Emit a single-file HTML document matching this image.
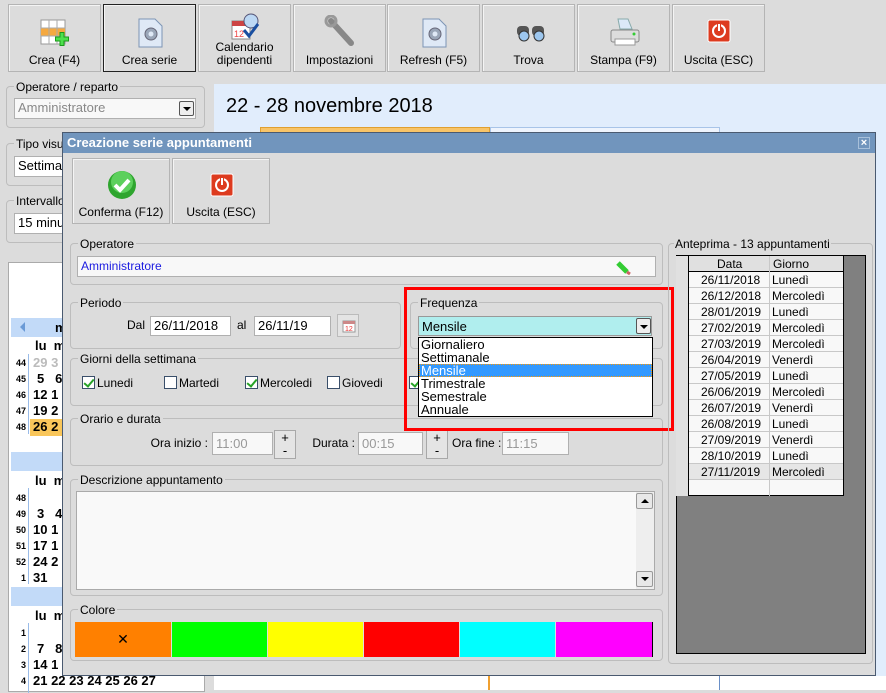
<!DOCTYPE html>
<html><head><meta charset="utf-8"><style>
*{box-sizing:border-box;margin:0;padding:0}
body{width:886px;height:690px;overflow:hidden;background:#dcdcdc;font-family:"Liberation Sans","DejaVu Sans",sans-serif;font-size:12px;color:#000;position:relative}
.a{position:absolute}
.btn{position:absolute;background:#dcdcdc;border:1px solid #b4b4b4;box-shadow:inset 1px 1px 0 #f4f4f4;text-align:center;font-size:12px}
.btn .l{position:absolute;left:0;right:0;bottom:4px;line-height:13px}
.grp{position:absolute;border:1px solid #bdbdbd;border-radius:4px}
.grp>.t{position:absolute;left:7px;top:-7px;background:#dcdcdc;padding:0 2px;line-height:14px}
.inp{position:absolute;background:#f8f8f8;border:1px solid #b0b0b0;line-height:18px;padding-left:3px}
.cb{position:absolute;width:13px;height:13px;border:1px solid #3a4f6a;background:#fff}
.cb.c::after{content:"";position:absolute;left:3px;top:0px;width:4px;height:8px;border:solid #27a327;border-width:0 2px 2px 0;transform:rotate(40deg)}
.pm{position:absolute;width:22px;height:29px;border:1px solid #a8a8a8;background:#e4e4e4;text-align:center;line-height:13px;font-size:13px}
.cal{position:absolute;font-weight:bold;font-size:13px}
.wk{position:absolute;font-weight:bold;font-size:9px;width:20px;text-align:right}
.tr{position:absolute;left:676px;width:167px;height:16px;border-bottom:1px solid #c8c8c8;background:#f8f8f8;font-size:12px;line-height:16px}
</style></head><body>

<!-- toolbar -->
<div class="btn" style="left:8px;top:4px;width:93px;height:68px">
<svg class="a" style="left:31px;top:14px" width="30" height="30"><rect x="1" y="1" width="24" height="24" fill="#fff" stroke="#999"/><rect x="1" y="9" width="24" height="8" fill="#f5a940"/><path d="M9 1V25M17 1V25M1 9H25M1 17H25" stroke="#aaa"/><path d="M22 13v14M15 20h14" stroke="#1b9a1b" stroke-width="5"/><path d="M22 14v12M16 20h12" stroke="#4de04d" stroke-width="3"/></svg>
<div class="l">Crea (F4)</div></div>
<div class="btn" style="left:103px;top:4px;width:93px;height:68px;border:1px solid #222">
<svg class="a" style="left:32px;top:12px" width="30" height="32"><path d="M3 2h16l7 7v21H3z" fill="#dfe9f6" stroke="#7d95b5"/><circle cx="15" cy="17" r="6" fill="#9aa6b8" stroke="#667"/><circle cx="15" cy="17" r="2.5" fill="#dfe9f6"/></svg>
<div class="l">Crea serie</div></div>
<div class="btn" style="left:198px;top:4px;width:93px;height:68px">
<svg class="a" style="left:31px;top:8px" width="32" height="30"><rect x="2" y="8" width="18" height="18" fill="#fff" stroke="#888"/><rect x="2" y="8" width="18" height="5" fill="#c44"/><text x="4" y="24" font-size="9" fill="#e44" font-family="Liberation Sans">12</text><circle cx="21" cy="8" r="7" fill="#bcd8f4" stroke="#557"/><path d="M14 17l5 6 9-12" stroke="#1a4fa0" stroke-width="3" fill="none"/></svg>
<div class="l">Calendario<br>dipendenti</div></div>
<div class="btn" style="left:293px;top:4px;width:93px;height:68px">
<svg class="a" style="left:30px;top:10px" width="34" height="34"><path d="M7 6l20 22" stroke="#888" stroke-width="6" stroke-linecap="round"/><circle cx="7" cy="6" r="5" fill="none" stroke="#999" stroke-width="3"/></svg>
<div class="l">Impostazioni</div></div>
<div class="btn" style="left:387px;top:4px;width:93px;height:68px">
<svg class="a" style="left:32px;top:12px" width="30" height="32"><path d="M3 2h16l7 7v21H3z" fill="#dfe9f6" stroke="#7d95b5"/><circle cx="15" cy="17" r="6" fill="#9aa6b8" stroke="#667"/><circle cx="15" cy="17" r="2.5" fill="#dfe9f6"/></svg>
<div class="l">Refresh (F5)</div></div>
<div class="btn" style="left:482px;top:4px;width:93px;height:68px">
<svg class="a" style="left:32px;top:18px" width="32" height="22"><rect x="2" y="3" width="12" height="10" rx="4" fill="#555"/><rect x="17" y="3" width="12" height="10" rx="4" fill="#555"/><circle cx="9" cy="13" r="5" fill="#9cc6ee" stroke="#333"/><circle cx="24" cy="13" r="5" fill="#9cc6ee" stroke="#333"/></svg>
<div class="l">Trova</div></div>
<div class="btn" style="left:577px;top:4px;width:93px;height:68px">
<svg class="a" style="left:30px;top:12px" width="34" height="32"><path d="M10 2h10l4 10H12z" fill="#dbe9f8" stroke="#8aa"/><rect x="3" y="13" width="28" height="12" rx="2" fill="#ddd" stroke="#888"/><rect x="7" y="22" width="20" height="6" fill="#fff" stroke="#999"/><circle cx="26" cy="17" r="1.5" fill="#3c3"/></svg>
<div class="l">Stampa (F9)</div></div>
<div class="btn" style="left:672px;top:4px;width:93px;height:68px">
<svg class="a" style="left:34px;top:14px" width="24" height="24"><rect x="1" y="1" width="22" height="22" rx="2" fill="#dd3b1f" stroke="#fff"/><circle cx="12" cy="12" r="6" fill="none" stroke="#fff" stroke-width="2"/><path d="M12 5v7" stroke="#dd3b1f" stroke-width="4"/><path d="M12 5v7" stroke="#fff" stroke-width="2"/></svg>
<div class="l">Uscita (ESC)</div></div>

<!-- left panel -->
<div class="grp" style="left:6px;top:86px;width:199px;height:42px"><div class="t">Operatore / reparto</div></div>
<div class="inp" style="left:14px;top:98px;width:182px;height:21px;color:#888;font-size:13px">Amministratore</div>
<div class="a" style="left:179px;top:101px;width:15px;height:15px;border:1px solid #555;border-radius:2px;background:#eee"><div class="a" style="left:3px;top:5px;border-left:4px solid transparent;border-right:4px solid transparent;border-top:4px solid #000"></div></div>
<div class="grp" style="left:6px;top:143px;width:199px;height:43px"><div class="t">Tipo visua</div></div>
<div class="inp" style="left:14px;top:156px;width:182px;height:21px;background:#fff;font-size:13px">Settima</div>
<div class="grp" style="left:6px;top:200px;width:199px;height:43px"><div class="t">Intervallo</div></div>
<div class="inp" style="left:14px;top:213px;width:182px;height:21px;background:#fff;font-size:13px">15 minu</div>

<div class="a" style="left:8px;top:262px;width:197px;height:430px;background:#fff;border:1px solid #aaa"></div>
<div class="a" style="left:11px;top:318px;width:192px;height:19px;background:#c2daf8"></div>
<div class="a" style="left:20px;top:322px;border-top:5px solid transparent;border-bottom:5px solid transparent;border-right:5px solid #6a9ad6"></div>
<div class="cal" style="left:55px;top:320px">m</div>
<div class="cal" style="left:35px;top:338px">lu&nbsp;&nbsp;m</div>
<div class="a" style="left:28px;top:354px;width:1px;height:80px;background:#99bbe8"></div>
<div class="a" style="left:30px;top:419px;width:40px;height:17px;background:#f9c65a"></div>
<div class="wk" style="left:6px;top:358px">44</div><div class="cal" style="left:33px;top:355px;color:#bbb">29&nbsp;3</div>
<div class="wk" style="left:6px;top:374px">45</div><div class="cal" style="left:37px;top:371px">5&nbsp;&nbsp;&nbsp;6</div>
<div class="wk" style="left:6px;top:390px">46</div><div class="cal" style="left:33px;top:387px">12&nbsp;1</div>
<div class="wk" style="left:6px;top:406px">47</div><div class="cal" style="left:33px;top:403px">19&nbsp;2</div>
<div class="wk" style="left:6px;top:422px">48</div><div class="cal" style="left:33px;top:419px">26&nbsp;2</div>
<div class="a" style="left:11px;top:452px;width:192px;height:19px;background:#c2daf8"></div>
<div class="cal" style="left:35px;top:473px">lu&nbsp;&nbsp;m</div>
<div class="a" style="left:28px;top:488px;width:1px;height:96px;background:#99bbe8"></div>
<div class="wk" style="left:6px;top:493px">48</div>
<div class="wk" style="left:6px;top:509px">49</div><div class="cal" style="left:37px;top:506px">3&nbsp;&nbsp;&nbsp;4</div>
<div class="wk" style="left:6px;top:525px">50</div><div class="cal" style="left:33px;top:522px">10&nbsp;1</div>
<div class="wk" style="left:6px;top:541px">51</div><div class="cal" style="left:33px;top:538px">17&nbsp;1</div>
<div class="wk" style="left:6px;top:557px">52</div><div class="cal" style="left:33px;top:554px">24&nbsp;2</div>
<div class="wk" style="left:6px;top:573px">1</div><div class="cal" style="left:33px;top:570px">31</div>
<div class="a" style="left:11px;top:587px;width:192px;height:19px;background:#c2daf8"></div>
<div class="cal" style="left:35px;top:608px">lu&nbsp;&nbsp;m</div>
<div class="a" style="left:28px;top:623px;width:1px;height:70px;background:#99bbe8"></div>
<div class="wk" style="left:6px;top:628px">1</div>
<div class="wk" style="left:6px;top:644px">2</div><div class="cal" style="left:37px;top:641px">7&nbsp;&nbsp;&nbsp;8</div>
<div class="wk" style="left:6px;top:660px">3</div><div class="cal" style="left:33px;top:657px">14&nbsp;1</div>
<div class="wk" style="left:6px;top:676px">4</div><div class="cal" style="left:33px;top:673px">21 22 23 24 25 26 27</div>

<!-- right calendar area -->
<div class="a" style="left:214px;top:84px;width:672px;height:606px;background:#e1edfc"></div>
<div class="a" style="left:226px;top:95px;font-size:20px">22 - 28 novembre 2018</div>
<div class="a" style="left:260px;top:127px;width:230px;height:10px;background:#f8c468;border:1px solid #e0a030"></div>
<div class="a" style="left:490px;top:127px;width:230px;height:10px;background:#eef4fd;border:1px solid #a8c4e8"></div>
<div class="a" style="left:214px;top:676px;width:672px;height:14px;background:#fff"></div>
<div class="a" style="left:488px;top:676px;width:2px;height:14px;background:#f0a030"></div>
<div class="a" style="left:719px;top:676px;width:1px;height:14px;background:#6a90c8"></div>

<!-- dialog -->
<div class="a" style="left:62px;top:132px;width:814px;height:544px;background:#dcdcdc;border:1px solid #4a5a70"></div>
<div class="a" style="left:63px;top:133px;width:812px;height:20px;background:#7195bd;color:#fff;font-weight:bold;font-size:13px;line-height:20px;padding-left:4px">Creazione serie appuntamenti</div>
<div class="a" style="left:858px;top:137px;width:12px;height:12px;border:1px solid #a8c0da;color:#fff;font-size:11px;font-weight:bold;line-height:10px;text-align:center">×</div>

<div class="btn" style="left:72px;top:158px;width:98px;height:66px">
<svg class="a" style="left:34px;top:11px" width="30" height="30"><circle cx="15" cy="15" r="14" fill="#2ea52e"/><circle cx="15" cy="12" r="11" fill="#5cd05c"/><path d="M8 15l5 5 9-10" stroke="#fff" stroke-width="4" fill="none"/></svg>
<div class="l">Conferma (F12)</div></div>
<div class="btn" style="left:172px;top:158px;width:98px;height:66px">
<svg class="a" style="left:37px;top:14px" width="24" height="24"><rect x="1" y="1" width="22" height="22" rx="2" fill="#dd3b1f" stroke="#fff"/><circle cx="12" cy="12" r="6" fill="none" stroke="#fff" stroke-width="2"/><path d="M12 5v7" stroke="#dd3b1f" stroke-width="4"/><path d="M12 5v7" stroke="#fff" stroke-width="2"/></svg>
<div class="l">Uscita (ESC)</div></div>

<div class="grp" style="left:70px;top:243px;width:593px;height:42px"><div class="t">Operatore</div></div>
<div class="inp" style="left:77px;top:256px;width:579px;height:21px;color:#1a1ae0">Amministratore</div>
<svg class="a" style="left:615px;top:259px" width="16" height="16"><path d="M3 4l9 9" stroke="#3c3" stroke-width="5"/><path d="M12 13l3 2" stroke="#c66" stroke-width="3"/></svg>

<div class="grp" style="left:70px;top:302px;width:331px;height:47px"><div class="t">Periodo</div></div>
<div class="a" style="left:127px;top:318px">Dal</div>
<div class="inp" style="left:150px;top:316px;width:81px;height:20px;background:#fff;font-size:13px">26/11/2018</div>
<div class="a" style="left:237px;top:318px">al</div>
<div class="inp" style="left:254px;top:316px;width:77px;height:20px;background:#fff;font-size:13px">26/11/19</div>
<div class="a" style="left:337px;top:314px;width:22px;height:23px;border:1px solid #bbb;background:#e4e4e4"><svg class="a" style="left:4px;top:4px" width="14" height="14"><rect x="1" y="2" width="12" height="11" fill="#fff" stroke="#999"/><rect x="1" y="2" width="12" height="3" fill="#c88"/><text x="3" y="12" font-size="7" fill="#e33" font-family="Liberation Sans">12</text></svg></div>

<div class="grp" style="left:70px;top:358px;width:593px;height:48px"><div class="t">Giorni della settimana</div></div>
<div class="cb c" style="left:82px;top:376px"></div><div class="a" style="left:97px;top:376px">Lunedi</div>
<div class="cb" style="left:164px;top:376px"></div><div class="a" style="left:179px;top:376px">Martedi</div>
<div class="cb c" style="left:245px;top:376px"></div><div class="a" style="left:260px;top:376px">Mercoledi</div>
<div class="cb" style="left:327px;top:376px"></div><div class="a" style="left:342px;top:376px">Giovedi</div>
<div class="cb c" style="left:409px;top:376px"></div>

<div class="grp" style="left:70px;top:418px;width:593px;height:48px"><div class="t">Orario e durata</div></div>
<div class="a" style="left:140px;top:436px;width:68px;text-align:right;white-space:nowrap">Ora inizio :</div>
<div class="inp" style="left:212px;top:432px;width:61px;height:23px;color:#999;font-size:13px;line-height:21px">11:00</div>
<div class="pm" style="left:274px;top:430px">+<br>-</div>
<div class="a" style="left:300px;top:436px;width:55px;text-align:right">Durata :</div>
<div class="inp" style="left:358px;top:432px;width:65px;height:23px;color:#999;font-size:13px;line-height:21px">00:15</div>
<div class="pm" style="left:426px;top:430px">+<br>-</div>
<div class="a" style="left:452px;top:436px">Ora fine :</div>
<div class="inp" style="left:502px;top:432px;width:67px;height:23px;color:#999;font-size:13px;line-height:21px">11:15</div>

<div class="grp" style="left:70px;top:479px;width:593px;height:117px"><div class="t">Descrizione appuntamento</div></div>
<div class="a" style="left:76px;top:491px;width:579px;height:99px;background:#f9f9f9;border:1px solid #aaa"></div>
<div class="a" style="left:636px;top:492px;width:18px;height:97px;background:#eee"></div>
<div class="a" style="left:636px;top:493px;width:17px;height:16px;border:1px solid #999;border-radius:2px;background:#e8e8e8"><div class="a" style="left:4px;top:5px;border-left:4px solid transparent;border-right:4px solid transparent;border-bottom:4px solid #000"></div></div>
<div class="a" style="left:636px;top:571px;width:17px;height:16px;border:1px solid #999;border-radius:2px;background:#e8e8e8"><div class="a" style="left:4px;top:5px;border-left:4px solid transparent;border-right:4px solid transparent;border-top:4px solid #000"></div></div>

<div class="grp" style="left:70px;top:609px;width:593px;height:52px"><div class="t">Colore</div></div>
<div class="a" style="left:75px;top:622px;width:578px;height:35px;display:flex;border-right:1px solid #000">
<div style="width:96px;background:#ff8000;text-align:center;line-height:35px;font-size:14px">✕</div>
<div style="width:96px;background:#00ff00;border-left:1px solid #ddd"></div>
<div style="width:96px;background:#ffff00;border-left:1px solid #ddd"></div>
<div style="width:96px;background:#ff0000;border-left:1px solid #ddd"></div>
<div style="width:96px;background:#00ffff;border-left:1px solid #ddd"></div>
<div style="width:97px;background:#ff00ff;border-left:1px solid #ddd"></div></div>

<!-- Frequenza -->
<div class="grp" style="left:410px;top:302px;width:253px;height:47px"><div class="t">Frequenza</div></div>
<div class="a" style="left:418px;top:316px;width:234px;height:20px;background:#b0eeee;border:1px solid #999;font-size:13px;line-height:19px;padding-left:3px">Mensile</div>
<div class="a" style="left:636px;top:318px;width:15px;height:16px;border:1px solid #555;border-radius:2px;background:#eee"><div class="a" style="left:3px;top:6px;border-left:4px solid transparent;border-right:4px solid transparent;border-top:4px solid #000"></div></div>
<div class="a" style="left:418px;top:337px;width:235px;height:80px;background:#fff;border:1px solid #000;font-size:13px;line-height:13px">
<div style="padding-left:2px">Giornaliero</div><div style="padding-left:2px">Settimanale</div>
<div style="padding-left:2px;background:#3399ff;color:#fff;outline:1px dotted #f90;outline-offset:-1px">Mensile</div>
<div style="padding-left:2px">Trimestrale</div><div style="padding-left:2px">Semestrale</div><div style="padding-left:2px">Annuale</div></div>
<div class="a" style="left:404px;top:287px;width:270px;height:144px;border:3px solid #f00"></div>

<!-- Anteprima -->
<div class="grp" style="left:668px;top:243px;width:205px;height:421px"><div class="t" style="left:5px;padding:0 1px">Anteprima - 13 appuntamenti</div></div>
<div class="a" style="left:676px;top:255px;width:190px;height:399px;background:#808080;border:1px solid #000"></div>
<div class="tr" style="top:256px;background:#e0e0e0;border-bottom:1px solid #000"><span class="a" style="left:41px">Data</span><span class="a" style="left:97px">Giorno</span></div>
<div class="tr" style="top:272px"><span class="a" style="left:25px">26/11/2018</span><span class="a" style="left:96px">Lunedì</span></div>
<div class="tr" style="top:288px"><span class="a" style="left:25px">26/12/2018</span><span class="a" style="left:96px">Mercoledì</span></div>
<div class="tr" style="top:304px"><span class="a" style="left:25px">28/01/2019</span><span class="a" style="left:96px">Lunedì</span></div>
<div class="tr" style="top:320px"><span class="a" style="left:25px">27/02/2019</span><span class="a" style="left:96px">Mercoledì</span></div>
<div class="tr" style="top:336px"><span class="a" style="left:25px">27/03/2019</span><span class="a" style="left:96px">Mercoledì</span></div>
<div class="tr" style="top:352px"><span class="a" style="left:25px">26/04/2019</span><span class="a" style="left:96px">Venerdì</span></div>
<div class="tr" style="top:368px"><span class="a" style="left:25px">27/05/2019</span><span class="a" style="left:96px">Lunedì</span></div>
<div class="tr" style="top:384px"><span class="a" style="left:25px">26/06/2019</span><span class="a" style="left:96px">Mercoledì</span></div>
<div class="tr" style="top:400px"><span class="a" style="left:25px">26/07/2019</span><span class="a" style="left:96px">Venerdì</span></div>
<div class="tr" style="top:416px"><span class="a" style="left:25px">26/08/2019</span><span class="a" style="left:96px">Lunedì</span></div>
<div class="tr" style="top:432px"><span class="a" style="left:25px">27/09/2019</span><span class="a" style="left:96px">Venerdì</span></div>
<div class="tr" style="top:448px"><span class="a" style="left:25px">28/10/2019</span><span class="a" style="left:96px">Lunedì</span></div>
<div class="tr" style="top:464px;background:#e6e6e6"><span class="a" style="left:25px">27/11/2019</span><span class="a" style="left:96px">Mercoledì</span></div>
<div class="tr" style="top:480px;border-bottom:1px solid #000;height:16px"></div>
<div class="a" style="left:676px;top:256px;width:13px;height:240px;background:#e0e0e0;border-right:1px solid #000"></div>
<div class="a" style="left:769px;top:256px;width:1px;height:240px;background:#c8c8c8"></div>
<div class="a" style="left:843px;top:256px;width:1px;height:240px;background:#000"></div>
</body></html>
